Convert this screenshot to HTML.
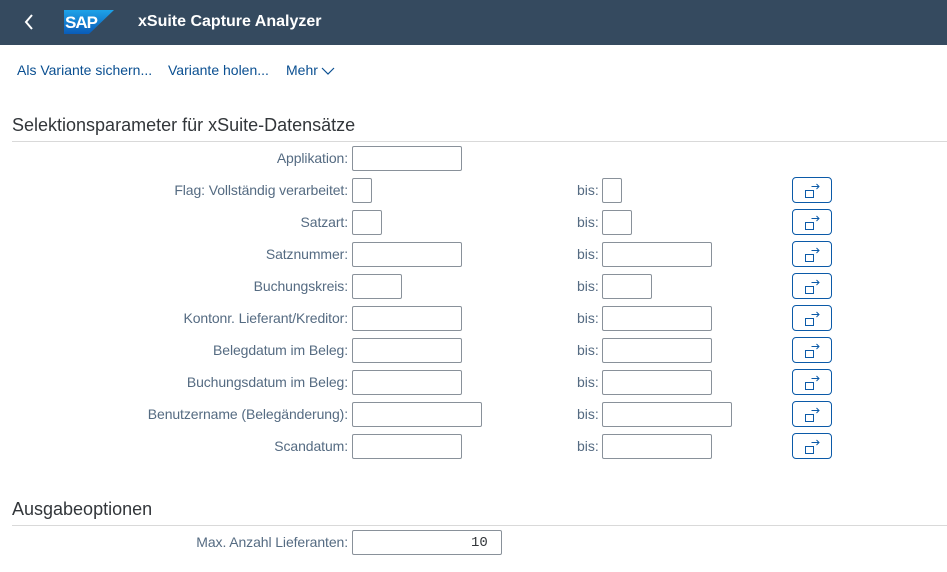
<!DOCTYPE html><html><head><meta charset="utf-8"><style>
*{box-sizing:border-box;margin:0;padding:0}
body{width:947px;height:572px;overflow:hidden;background:#fff;font-family:"Liberation Sans",sans-serif;position:relative}
.hdr{position:absolute;left:0;top:0;width:947px;height:45px;background:#354a5f}
.t{position:absolute;white-space:nowrap}
.lab{position:absolute;right:599px;font-size:14px;color:#556b82;line-height:25px;white-space:nowrap;letter-spacing:-0.1px}
.bis{position:absolute;left:577px;font-size:14px;color:#556b82;line-height:25px}
.in{position:absolute;height:25px;border:1px solid #89919a;border-radius:2px;background:#fff}
.btn{position:absolute;left:792px;width:40px;height:26px;border:1px solid #0b5aa8;border-radius:4px;background:#fff}
.btn svg{position:absolute;left:10px;top:3px}
.line{position:absolute;left:12px;right:0;height:1px;background:#d9d9d9}
</style></head><body>
<div class="hdr"></div>
<svg class="t" style="left:22px;top:12px" width="14" height="20"><path d="M10 3 L4 10 L10 17" stroke="#fff" stroke-width="2" fill="none"/></svg>
<svg class="t" style="left:64px;top:10px" width="50" height="25"><defs><linearGradient id="g" x1="0" y1="0" x2="0" y2="1"><stop offset="0" stop-color="#1ea2e8"/><stop offset="1" stop-color="#0a5bb8"/></linearGradient></defs><polygon points="0,0 50,0 25,24 0,24" fill="url(#g)"/><text x="1" y="18" font-family="Liberation Sans" font-weight="bold" font-size="17" fill="#fff" letter-spacing="-1">SAP</text></svg>
<div class="t" style="left:138px;top:13px;font-size:16px;color:#fff;font-weight:bold">xSuite Capture Analyzer</div>
<div class="t" style="left:17px;top:62px;font-size:14px;color:#0a4f91">Als Variante sichern...</div>
<div class="t" style="left:168px;top:62px;font-size:14px;color:#0a4f91">Variante holen...</div>
<div class="t" style="left:286px;top:62px;font-size:14px;color:#0a4f91">Mehr</div>
<svg class="t" style="left:321px;top:66px" width="14" height="10"><path d="M1 2 L7 8 L13 2" stroke="#0a4f91" stroke-width="1.2" fill="none"/></svg>
<div class="t" style="left:12px;top:115px;font-size:18px;color:#32363a">Selektionsparameter für xSuite-Datensätze</div>
<div class="line" style="top:141px"></div>

<div class="lab" style="top:146px">Applikation:</div><div class="in" style="left:352px;top:146px;width:110px"></div>

<div class="lab" style="top:178px">Flag: Vollständig verarbeitet:</div><div class="in" style="left:352px;top:178px;width:20px"></div><div class="bis" style="top:178px">bis:</div><div class="in" style="left:602px;top:178px;width:20px"></div>
<div class="btn" style="top:177px"><svg width="20" height="20"><rect x="2.5" y="9.5" width="8" height="7" fill="none" stroke="#0b5aa8"/><path d="M8.5 5.5 H16 M13.5 3 L16 5.5 L13.5 8" stroke="#0b5aa8" fill="none"/></svg></div>

<div class="lab" style="top:210px">Satzart:</div><div class="in" style="left:352px;top:210px;width:30px"></div><div class="bis" style="top:210px">bis:</div><div class="in" style="left:602px;top:210px;width:30px"></div>
<div class="btn" style="top:209px"><svg width="20" height="20"><rect x="2.5" y="9.5" width="8" height="7" fill="none" stroke="#0b5aa8"/><path d="M8.5 5.5 H16 M13.5 3 L16 5.5 L13.5 8" stroke="#0b5aa8" fill="none"/></svg></div>

<div class="lab" style="top:242px">Satznummer:</div><div class="in" style="left:352px;top:242px;width:110px"></div><div class="bis" style="top:242px">bis:</div><div class="in" style="left:602px;top:242px;width:110px"></div>
<div class="btn" style="top:241px"><svg width="20" height="20"><rect x="2.5" y="9.5" width="8" height="7" fill="none" stroke="#0b5aa8"/><path d="M8.5 5.5 H16 M13.5 3 L16 5.5 L13.5 8" stroke="#0b5aa8" fill="none"/></svg></div>

<div class="lab" style="top:274px">Buchungskreis:</div><div class="in" style="left:352px;top:274px;width:50px"></div><div class="bis" style="top:274px">bis:</div><div class="in" style="left:602px;top:274px;width:50px"></div>
<div class="btn" style="top:273px"><svg width="20" height="20"><rect x="2.5" y="9.5" width="8" height="7" fill="none" stroke="#0b5aa8"/><path d="M8.5 5.5 H16 M13.5 3 L16 5.5 L13.5 8" stroke="#0b5aa8" fill="none"/></svg></div>

<div class="lab" style="top:306px">Kontonr. Lieferant/Kreditor:</div><div class="in" style="left:352px;top:306px;width:110px"></div><div class="bis" style="top:306px">bis:</div><div class="in" style="left:602px;top:306px;width:110px"></div>
<div class="btn" style="top:305px"><svg width="20" height="20"><rect x="2.5" y="9.5" width="8" height="7" fill="none" stroke="#0b5aa8"/><path d="M8.5 5.5 H16 M13.5 3 L16 5.5 L13.5 8" stroke="#0b5aa8" fill="none"/></svg></div>

<div class="lab" style="top:338px">Belegdatum im Beleg:</div><div class="in" style="left:352px;top:338px;width:110px"></div><div class="bis" style="top:338px">bis:</div><div class="in" style="left:602px;top:338px;width:110px"></div>
<div class="btn" style="top:337px"><svg width="20" height="20"><rect x="2.5" y="9.5" width="8" height="7" fill="none" stroke="#0b5aa8"/><path d="M8.5 5.5 H16 M13.5 3 L16 5.5 L13.5 8" stroke="#0b5aa8" fill="none"/></svg></div>

<div class="lab" style="top:370px">Buchungsdatum im Beleg:</div><div class="in" style="left:352px;top:370px;width:110px"></div><div class="bis" style="top:370px">bis:</div><div class="in" style="left:602px;top:370px;width:110px"></div>
<div class="btn" style="top:369px"><svg width="20" height="20"><rect x="2.5" y="9.5" width="8" height="7" fill="none" stroke="#0b5aa8"/><path d="M8.5 5.5 H16 M13.5 3 L16 5.5 L13.5 8" stroke="#0b5aa8" fill="none"/></svg></div>

<div class="lab" style="top:402px">Benutzername (Belegänderung):</div><div class="in" style="left:352px;top:402px;width:130px"></div><div class="bis" style="top:402px">bis:</div><div class="in" style="left:602px;top:402px;width:130px"></div>
<div class="btn" style="top:401px"><svg width="20" height="20"><rect x="2.5" y="9.5" width="8" height="7" fill="none" stroke="#0b5aa8"/><path d="M8.5 5.5 H16 M13.5 3 L16 5.5 L13.5 8" stroke="#0b5aa8" fill="none"/></svg></div>

<div class="lab" style="top:434px">Scandatum:</div><div class="in" style="left:352px;top:434px;width:110px"></div><div class="bis" style="top:434px">bis:</div><div class="in" style="left:602px;top:434px;width:110px"></div>
<div class="btn" style="top:433px"><svg width="20" height="20"><rect x="2.5" y="9.5" width="8" height="7" fill="none" stroke="#0b5aa8"/><path d="M8.5 5.5 H16 M13.5 3 L16 5.5 L13.5 8" stroke="#0b5aa8" fill="none"/></svg></div>

<div class="t" style="left:12px;top:499px;font-size:18px;color:#32363a">Ausgabeoptionen</div>
<div class="line" style="top:525px"></div>
<div class="lab" style="top:530px">Max. Anzahl Lieferanten:</div>
<div class="in" style="left:352px;top:530px;width:150px"></div>
<div class="t" style="left:471px;top:535px;font-family:'Liberation Mono',monospace;font-size:14px;color:#32363a">10</div>
</body></html>
